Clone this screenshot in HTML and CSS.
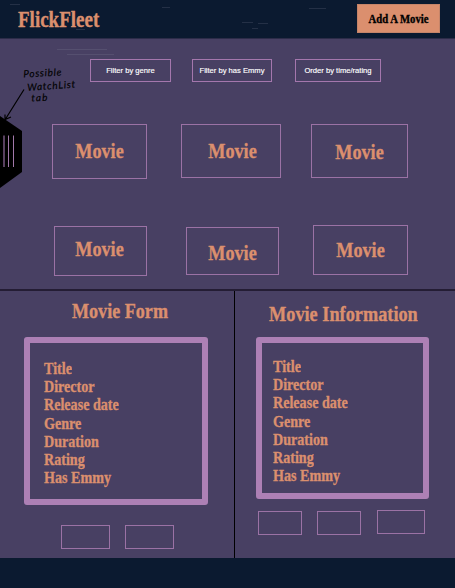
FILE: index.html
```html
<!DOCTYPE html>
<html lang="en">
<head>
<meta charset="utf-8">
<title>FlickFleet</title>
<link rel="stylesheet" href="styles.css">
</head>
<body>
<header class="header">
  <h1 class="logo tall">FlickFleet</h1>
  <svg class="specks" viewBox="0 0 455 60" aria-hidden="true">
    <path d="M10 4.500h10M162 7.500h8M309 8.500h17M76 29.500h9M242 22.500h11M258 23.500h10M252 28.500h6M57 49.500h50M67 54.500h47"/>
  </svg>
  <button class="add"><span class="tall">Add A Movie</span></button>
</header>
<main class="main">
  <nav class="filters">
    <button class="filter genre">Filter by genre</button>
    <button class="filter emmy">Filter by has Emmy</button>
    <button class="filter order">Order by time/rating</button>
  </nav>
  <svg class="note" viewBox="0 0 80 130">
    <g class="hand">
      <text x="23.500" y="77.500" textLength="38" lengthAdjust="spacing" transform="rotate(-3 23 78)">Possible</text>
      <text x="27.500" y="91" textLength="48" lengthAdjust="spacing" transform="rotate(-4 27 91)">WatchList</text>
      <text x="31.500" y="101.500" textLength="16" lengthAdjust="spacing" transform="rotate(-2 31 102)">tab</text>
    </g>
    <path class="arrow" d="M24 89.500L5.500 119M5 114.500V119.500L11 117"/>
  </svg>
  <svg class="tab" viewBox="0 0 22 72" aria-hidden="true">
    <path d="M0 0L22 15V56L0 72Z"/>
    <path class="bar dim" d="M4 19.500V51"/>
    <path class="bar" d="M8.500 19.500V51M13.500 19.500V51"/>
  </svg>
  <section class="cards">
    <article class="card a"><span class="tall">Movie</span></article>
    <article class="card b"><span class="tall">Movie</span></article>
    <article class="card c"><span class="tall">Movie</span></article>
  </section>
  <section class="cards second">
    <article class="card d"><span class="tall">Movie</span></article>
    <article class="card e"><span class="tall">Movie</span></article>
    <article class="card f"><span class="tall">Movie</span></article>
  </section>
</main>
<div class="panels">
  <section class="panel form">
    <h2 class="heading tall">Movie Form</h2>
    <ul class="fields">
      <li class="tall">Title</li><li class="tall">Director</li><li class="tall">Release date</li><li class="tall">Genre</li><li class="tall">Duration</li><li class="tall">Rating</li><li class="tall">Has Emmy</li>
    </ul>
    <div class="actions"><button class="action"></button><button class="action"></button></div>
  </section>
  <section class="panel info">
    <h2 class="heading tall">Movie Information</h2>
    <ul class="fields">
      <li class="tall">Title</li><li class="tall">Director</li><li class="tall">Release date</li><li class="tall">Genre</li><li class="tall">Duration</li><li class="tall">Rating</li><li class="tall">Has Emmy</li>
    </ul>
    <div class="actions"><button class="action"></button><button class="action"></button><button class="action last"></button></div>
  </section>
</div>
<footer class="footer"></footer>
</body>
</html>
```
FILE: styles.css
```css
* { box-sizing: border-box; }
body {
  margin: 0;
  width: 455px;
  height: 588px;
  overflow: hidden;
  position: relative;
  background: #484063;
  color: #db8f6e;
  font-family: "Liberation Serif", serif;
  font-weight: 700;
}
h1, h2, ul { margin: 0; padding: 0; }
button {
  margin: 0;
  padding: 0;
  background: none;
  font: inherit;
}
/* Condensed display lettering, stretched upward from the baseline */
.tall {
  display: block;
  white-space: nowrap;
  transform: scaleY(1.2);
  transform-origin: 0 15px;
  -webkit-text-stroke: 0.3px currentColor;
}
.header {
  display: flex;
  justify-content: space-between;
  height: 39px;
  padding: 4px 15px 0 18px;
  background: #0b1a30;
  border-bottom: 1px solid #2d2c49;
}
.logo {
  margin-top: 8px;
  font-size: 19px;
  line-height: 18px;
}
.specks {
  position: absolute;
  left: 0;
  top: 0;
  width: 455px;
  height: 60px;
  stroke: #8a8ba0;
  opacity: 0.2;
}
.add {
  width: 83px;
  height: 29px;
  border: 1px solid #c58469;
  background: #db8f6e;
  color: #000;
  font-size: 10.7px;
  line-height: 18px;
  text-align: center;
}
.add .tall { transform-origin: 0 11px; }
.main { height: 250px; }
.filters {
  display: flex;
  padding: 20px 0 0 90px;
  height: 85px;
}
.filter {
  height: 23px;
  border: 1px solid #a477ad;
  color: #fff;
  font: 7.6px/20px "Liberation Sans", sans-serif;
  white-space: nowrap;
  -webkit-text-stroke: 0.15px currentColor;
}
.genre { width: 81px; }
.emmy { width: 80px; margin-left: 21px; }
.order { width: 86px; margin-left: 23px; line-height: 19px; }
.note {
  position: absolute;
  left: 0;
  top: 0;
  width: 80px;
  height: 130px;
}
.hand {
  font: italic 400 10px Lato, sans-serif;
  fill: #000;
  stroke: #000;
  stroke-width: 0.15;
}
.arrow { fill: none; stroke: #000; stroke-width: 1.2; }
.tab {
  position: absolute;
  left: 0;
  top: 116px;
  width: 22px;
  height: 72px;
}
.bar { stroke: #a278aa; stroke-width: 1; }
.dim { stroke: #63486b; stroke-width: 1.8; }
.cards {
  display: flex;
  align-items: flex-start;
  height: 101px;
  padding-left: 52px;
}
.card {
  border: 1px solid #9b72a5;
  font-size: 18.2px;
  line-height: 18px;
  text-align: center;
}
.a { width: 95px; height: 55px; padding-top: 18px; }
.b { width: 100px; height: 54px; margin-left: 34px; padding: 18px 0 0 3px; }
.c { width: 97px; height: 54px; margin-left: 30px; padding-top: 19px; }
.second { padding-left: 54px; }
.d { width: 93px; height: 50px; margin-top: 1px; padding: 14px 2px 0 0; }
.e { width: 93px; height: 48px; margin: 2px 0 0 39px; padding-top: 17px; }
.f { width: 95px; height: 50px; margin-left: 34px; padding-top: 16px; }
.panels {
  display: grid;
  grid-template-columns: 235px 220px;
  height: 269px;
  border-top: 2px solid #241d34;
}
.form { border-right: 1px solid #000; }
.heading {
  font-size: 18.1px;
  line-height: 18px;
}
.form .heading { margin: 12px 0 0 72px; }
.info .heading { margin: 15px 0 0 49px; margin-left: 34px; font-size: 18.3px; }
.fields {
  list-style: none;
  border: 6px solid #ad80b5;
  border-radius: 3px;
  font-size: 14.1px;
  line-height: 18.2px;
}
.fields .tall { transform-origin: 0 14px; }
.form .fields {
  width: 184px;
  height: 168px;
  margin: 16px 0 0 24px;
  padding: 17px 0 0 14px;
}
.info .fields {
  width: 173px;
  height: 162px;
  margin: 13px 0 0 21px;
  padding: 15px 0 0 11px;
}
.actions { display: flex; align-items: flex-start; }
.form .actions { gap: 15px; padding: 20px 0 0 61px; }
.info .actions { gap: 15px; padding: 11px 0 0 23px; }
.action {
  width: 49px;
  height: 24px;
  border: 1px solid #9b72a5;
}
.info .action { width: 44px; margin-top: 1px; }
.info .last { width: 48px; margin: 0 0 0 1px; }
.footer {
  height: 30px;
  background: #0b1a30;
}
```
